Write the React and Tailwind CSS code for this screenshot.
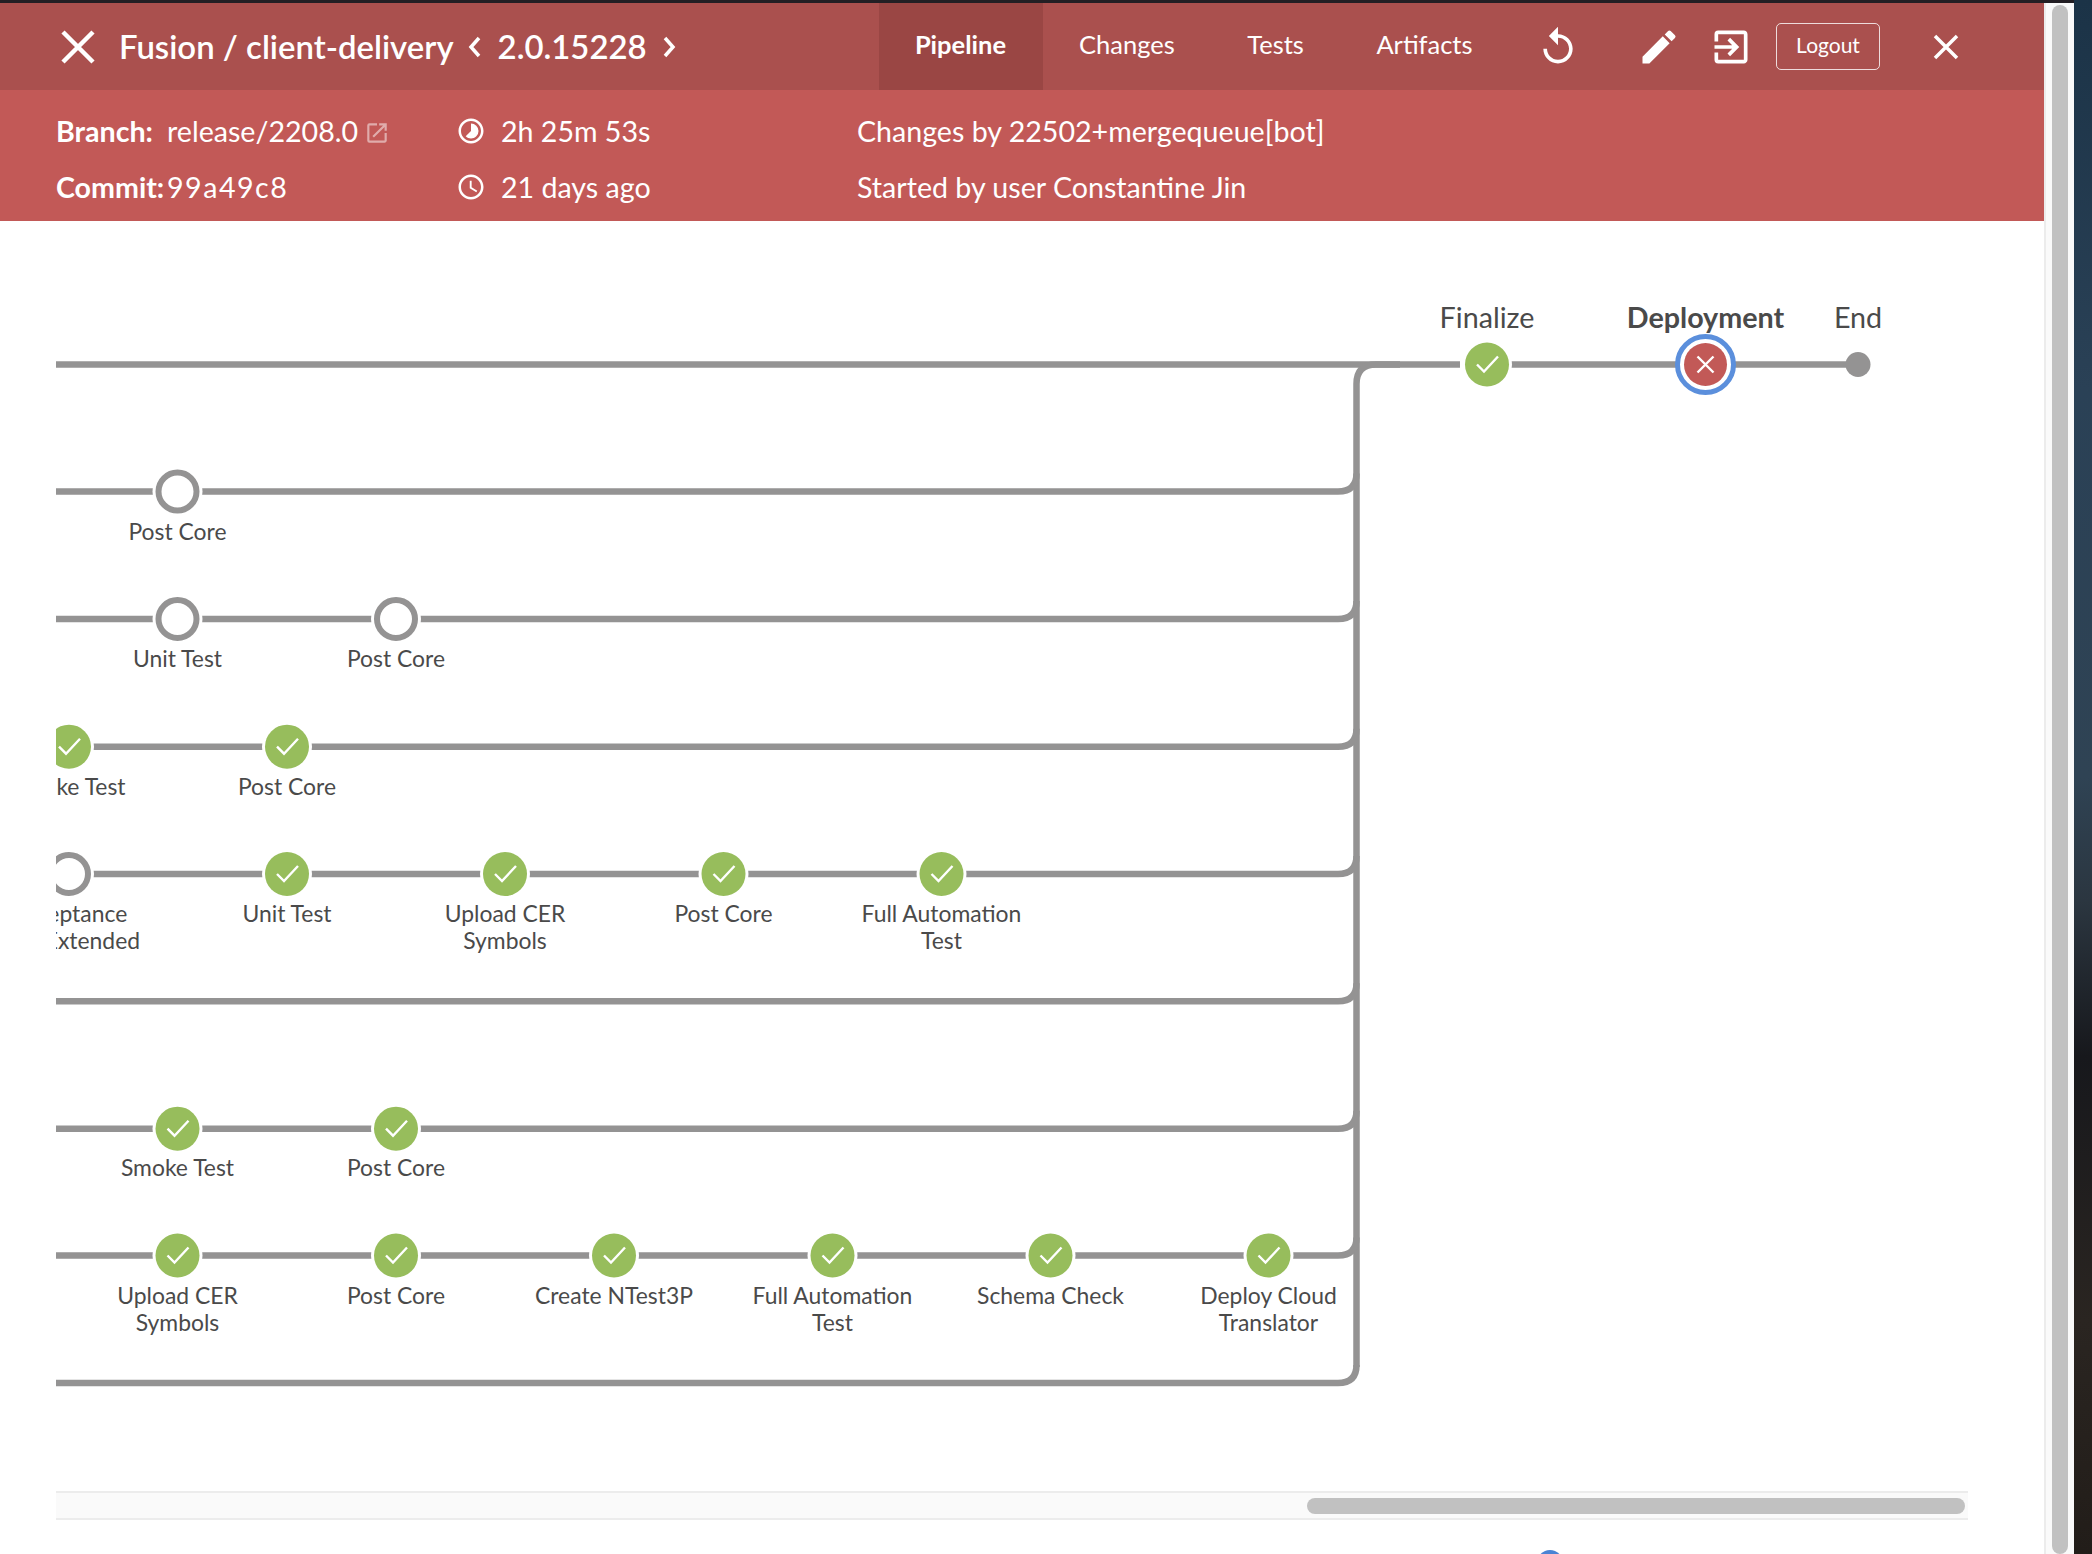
import React from 'react';
import { MdReplay, MdEdit, MdExitToApp, MdTimelapse, MdAccessTime, MdOpenInNew } from 'react-icons/md';

const ROWS = [491.5, 619, 746.7, 874, 1001.3, 1128.7, 1255.5, 1383];

const NODES = [
  { x: 177.5, y: 491.5, state: 'idle', label: ['Post Core'] },
  { x: 177.5, y: 619, state: 'idle', label: ['Unit Test'] },
  { x: 396, y: 619, state: 'idle', label: ['Post Core'] },
  { x: 69, y: 746.7, state: 'ok', label: ['Smoke Test'] },
  { x: 287, y: 746.7, state: 'ok', label: ['Post Core'] },
  { x: 69, y: 874, state: 'idle', label: ['Acceptance', 'Test Extended'] },
  { x: 287, y: 874, state: 'ok', label: ['Unit Test'] },
  { x: 505, y: 874, state: 'ok', label: ['Upload CER', 'Symbols'] },
  { x: 723.5, y: 874, state: 'ok', label: ['Post Core'] },
  { x: 941.5, y: 874, state: 'ok', label: ['Full Automation', 'Test'] },
  { x: 177.5, y: 1128.7, labelY: 1176, state: 'ok', label: ['Smoke Test'] },
  { x: 396, y: 1128.7, labelY: 1176, state: 'ok', label: ['Post Core'] },
  { x: 177.5, y: 1255.5, state: 'ok', label: ['Upload CER', 'Symbols'] },
  { x: 396, y: 1255.5, state: 'ok', label: ['Post Core'] },
  { x: 614, y: 1255.5, state: 'ok', label: ['Create NTest3P'] },
  { x: 832.5, y: 1255.5, state: 'ok', label: ['Full Automation', 'Test'] },
  { x: 1050.5, y: 1255.5, state: 'ok', label: ['Schema Check'] },
  { x: 1268.5, y: 1255.5, state: 'ok', label: ['Deploy Cloud', 'Translator'] },
];

const Node = ({ x, y, labelY, state, label }) => (
  <g>
    <circle cx={x} cy={y} r={25} className="fill-white" />
    {state === 'ok' ? (
      <>
        <circle cx={x} cy={y} r={22} className="fill-[#97bd5c]" />
        <path d={`M${x - 10} ${y}l7 7 14-15`} fill="none" strokeWidth="2.4" className="stroke-white" />
      </>
    ) : (
      <circle cx={x} cy={y} r={19} fill="none" strokeWidth="6" className="stroke-[#949393]" />
    )}
    {label.map((line, i) => (
      <text key={line} x={x} y={(labelY ?? y + 48) + i * 27} textAnchor="middle" className="fill-[#4a4a4a] text-[22.9px]">
        {line}
      </text>
    ))}
  </g>
);

const PipelineGraph = () => (
  <svg width="1912" height="1270" viewBox="56 221 1912 1270" className="block">
    <g fill="none" strokeWidth="6.5" className="stroke-[#949393]">
      <path d="M56 364.5H1460" />
      <path d="M1356.5 1367V384Q1356.5 364.5 1376 364.5H1400" />
      {ROWS.map((y) => (
        <path key={y} d={`M56 ${y}H1338Q1356.5 ${y} 1356.5 ${y - 18}`} />
      ))}
      <path d="M1510 364.5H1858" />
    </g>
    {NODES.map((node) => (
      <Node key={`${node.x}-${node.y}`} {...node} />
    ))}

    <circle cx={1487} cy={364.5} r={25} className="fill-white" />
    <circle cx={1487} cy={364.5} r={22} className="fill-[#97bd5c]" />
    <path d="M1477 364.5l7 7 14-15" fill="none" strokeWidth="2.4" className="stroke-white" />
    <text x={1487} y={328} textAnchor="middle" className="fill-[#4a4a4a] text-[28.7px]">Finalize</text>

    <circle cx={1705.5} cy={364.5} r={28} strokeWidth="5" className="fill-white stroke-[#5b8fdc]" />
    <circle cx={1705.5} cy={364.5} r={21.5} className="fill-[#c25957]" />
    <path d="M1697.5 356.5l16 16m0-16l-16 16" fill="none" strokeWidth="2.4" className="stroke-white" />
    <text x={1705.5} y={328} textAnchor="middle" className="fill-[#4a4a4a] text-[28.7px] font-bold">Deployment</text>

    <circle cx={1858} cy={364.5} r={12.5} className="fill-[#949393]" />
    <text x={1858} y={328} textAnchor="middle" className="fill-[#4a4a4a] text-[28.7px]">End</text>
  </svg>
);

const TABS = ['Pipeline', 'Changes', 'Tests', 'Artifacts'];

export default function App() {
  return (
    <div className="h-screen w-full overflow-hidden flex bg-[linear-gradient(180deg,#1b3347_0%,#2a4156_25%,#2f4354_50%,#2b3640_58%,#17181c_68%,#2a2521_85%,#221d19_100%)] font-['Lato',sans-serif]">
      <div className="w-[2074px] h-full flex flex-col">
        <div className="h-[3px] bg-[#231f24] shrink-0" />
        <div className="flex flex-1 min-h-0">
          {/* Main dialog */}
          <div className="w-[2044px] bg-white flex flex-col">
            <header className="h-[87px] shrink-0 bg-[#aa504e] flex items-center text-white">
              <svg width="34" height="34" viewBox="0 0 34 34" className="ml-[61px] shrink-0">
                <path d="M2 2l30 30M32 2L2 32" fill="none" stroke="currentColor" strokeWidth="4.5" />
              </svg>
              <span className="ml-[24px] text-[32.9px] font-semibold whitespace-nowrap">Fusion / client-delivery</span>
              <svg width="14" height="22" viewBox="0 0 14 22" className="ml-[14px] shrink-0">
                <path d="M11 2L3 11l8 9" fill="none" stroke="currentColor" strokeWidth="3.5" />
              </svg>
              <span className="ml-[16px] text-[32.9px] font-semibold">2.0.15228</span>
              <svg width="14" height="22" viewBox="0 0 14 22" className="ml-[15px] shrink-0">
                <path d="M3 2l8 9-8 9" fill="none" stroke="currentColor" strokeWidth="3.5" />
              </svg>

              <nav className="ml-auto flex h-full items-stretch">
                <div className="pl-[36px] pr-[37px] pb-[4px] flex items-center text-[25.5px] font-bold bg-[#9a4644]">{TABS[0]}</div>
                {TABS.slice(1).map((tab) => (
                  <div key={tab} className="pl-[36px] pr-[36.5px] pb-[4px] flex items-center text-[25.5px]">
                    {tab}
                  </div>
                ))}
              </nav>
              <div className="flex items-center w-[535px] shrink-0">
                <MdReplay className="ml-[27px] w-[44px] h-[44px]" />
                <MdEdit className="ml-[57px] w-[44px] h-[44px]" />
                <MdExitToApp className="ml-[28px] w-[44px] h-[44px]" />
                <div className="ml-[23px] w-[104px] h-[47px] pb-[3px] rounded-[5px] border border-white/80 flex items-center justify-center text-[21px]">
                  Logout
                </div>
                <svg width="26" height="26" viewBox="0 0 26 26" className="ml-[53px]">
                  <path d="M2 2l22 22M24 2L2 24" fill="none" stroke="currentColor" strokeWidth="3.5" />
                </svg>
              </div>
            </header>

            <section className="h-[131px] shrink-0 bg-[#c25957] text-white text-[28.6px] pl-[56px] pt-[7px] flex">
              <div className="w-[400px] flex flex-col justify-center gap-[20px]">
                <div className="flex items-center h-[36px]">
                  <span className="font-bold w-[111px]">Branch:</span>
                  <span>release/2208.0</span>
                  <MdOpenInNew className="ml-[6px] w-[26px] h-[26px] mt-[3px] opacity-50" />
                </div>
                <div className="flex items-center h-[36px]">
                  <span className="font-bold w-[111px]">Commit:</span>
                  <span className="tracking-[1.5px]">99a49c8</span>
                </div>
              </div>
              <div className="w-[401px] flex flex-col justify-center gap-[20px]">
                <div className="flex items-center h-[36px] gap-[15px]">
                  <MdTimelapse className="w-[30px] h-[30px]" />
                  <span>2h 25m 53s</span>
                </div>
                <div className="flex items-center h-[36px] gap-[15px]">
                  <MdAccessTime className="w-[30px] h-[30px]" />
                  <span>21 days ago</span>
                </div>
              </div>
              <div className="flex flex-col justify-center gap-[20px]">
                <div className="flex items-center h-[36px]">Changes by 22502+mergequeue[bot]</div>
                <div className="flex items-center h-[36px]">Started by user Constantine Jin</div>
              </div>
            </section>

            <div className="flex-1 min-h-0 flex flex-col pl-[56px]">
              <div className="w-[1912px] h-[1270px] overflow-hidden shrink-0">
                <PipelineGraph />
              </div>
              {/* Horizontal scrollbar */}
              <div className="w-[1912px] h-[29px] shrink-0 bg-[#fafafa] border-y-2 border-[#ececec] flex items-center justify-end pr-[3px]">
                <div className="w-[658px] h-[16px] rounded-full bg-[#c1c1c1]" />
              </div>
              <div className="ml-[1481px] mt-[30px] w-[26px] h-[26px] rounded-full bg-[#4a83d4] shrink-0" />
            </div>
          </div>

          {/* Page scrollbar */}
          <div className="w-[30px] bg-[#fafafa] border-l-2 border-[#ececec] pl-[6px] pt-[2px]">
            <div className="w-[16px] h-full rounded-full bg-[#c1c1c1]" />
          </div>
        </div>
      </div>
    </div>
  );
}
